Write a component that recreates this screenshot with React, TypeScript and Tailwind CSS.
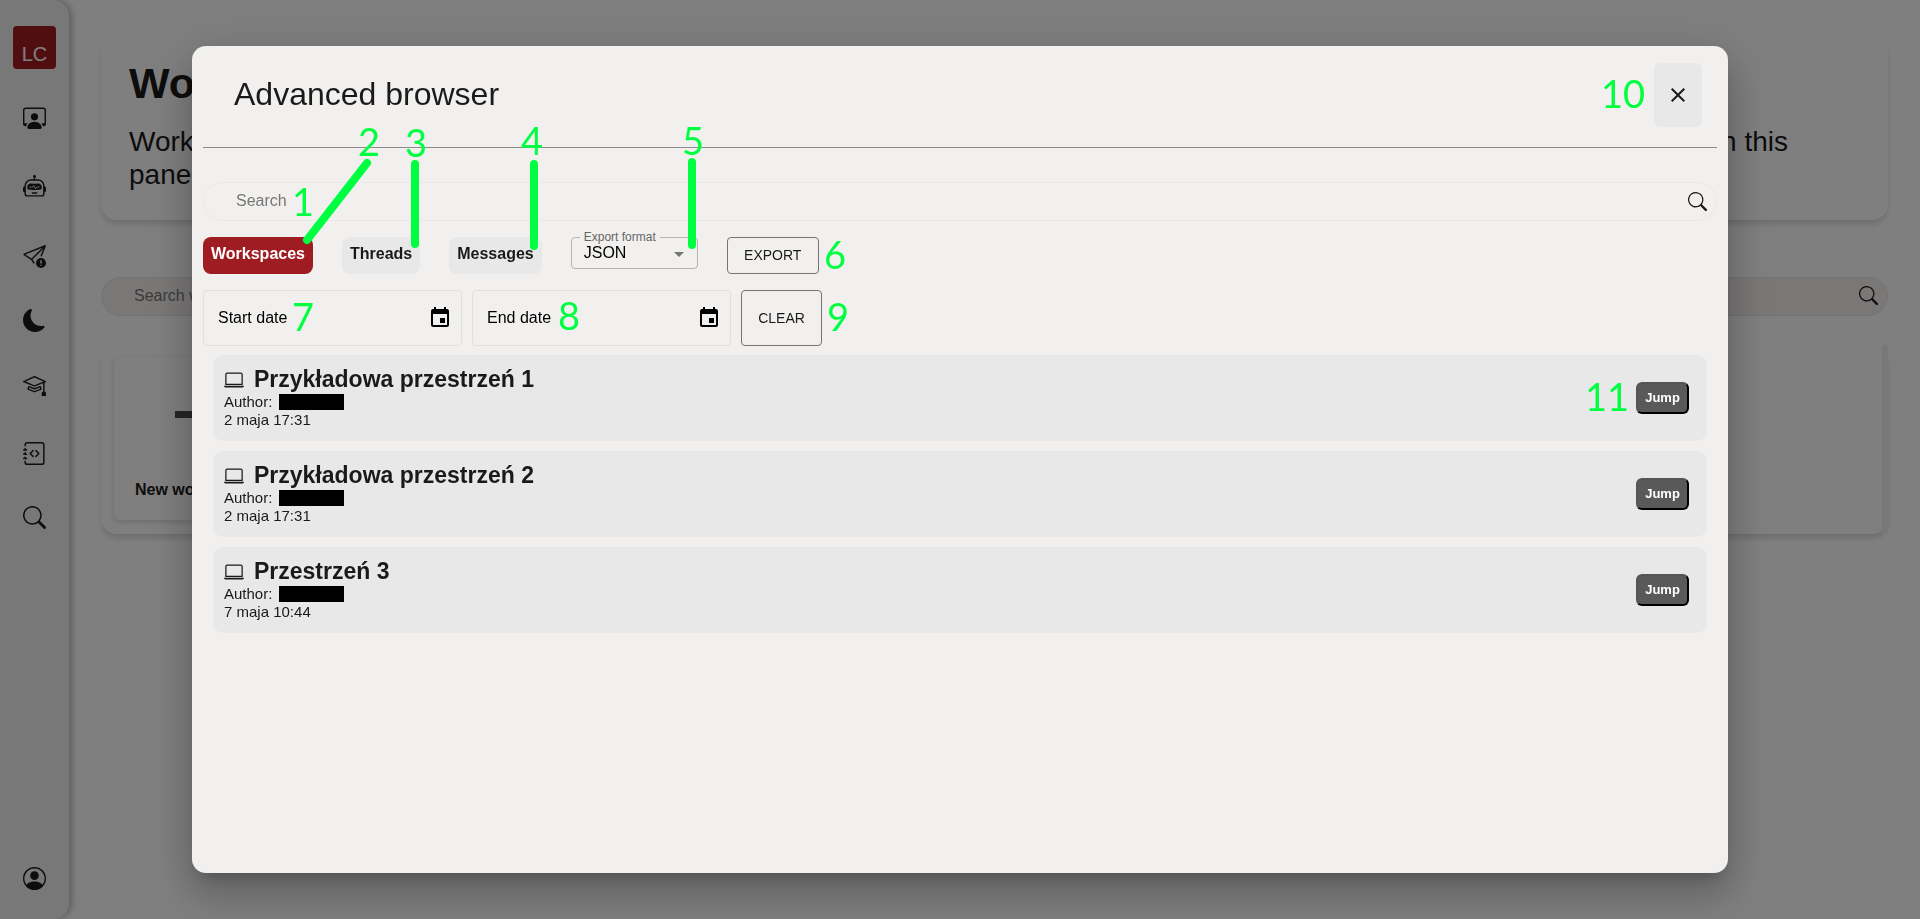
import { useState } from 'react';
import {
  BsJournalCode,
  BsLaptop,
  BsMoonFill,
  BsMortarboard,
  BsPersonCircle,
  BsPersonWorkspace,
  BsRobot,
  BsSearch,
  BsSendExclamation,
} from 'react-icons/bs';
import { MdArrowDropDown, MdClose, MdEvent } from 'react-icons/md';

const NAV_ITEMS = [
  { label: 'Workspaces', icon: BsPersonWorkspace, space: 'mb-[46px]' },
  { label: 'Assistants', icon: BsRobot, space: 'mb-[47px]' },
  { label: 'Report a problem', icon: BsSendExclamation, space: 'mb-[41px]' },
  { label: 'Dark mode', icon: BsMoonFill, space: 'mb-[41px]' },
  { label: 'Tutorial', icon: BsMortarboard, space: 'mb-[46px]' },
  { label: 'Documentation', icon: BsJournalCode, space: 'mb-[41px]' },
  { label: 'Advanced browser', icon: BsSearch, space: '' },
];

const TABS = ['Workspaces', 'Threads', 'Messages'] as const;

const RESULTS = [
  { id: 1, name: 'Przykładowa przestrzeń 1', date: '2 maja 17:31' },
  { id: 2, name: 'Przykładowa przestrzeń 2', date: '2 maja 17:31' },
  { id: 3, name: 'Przestrzeń 3', date: '7 maja 10:44' },
];

// Numbered callouts drawn on top of the dialog, relative to its corner
const CALLOUTS = [
  { text: '1', place: 'left-[100px] top-[136px]' },
  { text: '2', place: 'left-[166px] top-[76px]' },
  { text: '3', place: 'left-[213px] top-[77px]' },
  { text: '4', place: 'left-[329px] top-[75px]' },
  { text: '5', place: 'left-[490px] top-[75px]' },
  { text: '6', place: 'left-[632px] top-[189px]' },
  { text: '7', place: 'left-[100px] top-[251px]' },
  { text: '8', place: 'left-[366px] top-[250px]' },
  { text: '9', place: 'left-[635px] top-[251px]' },
  { text: '10', place: 'right-[83px] top-[28px]' },
  { text: '11', place: 'right-[99px] top-[331px]' },
];

function Sidebar() {
  return (
    <nav
      aria-label="Main"
      className="flex w-[69px] shrink-0 flex-col items-center rounded-r-2xl bg-[#f1f1f1] pt-[26px] pb-[29px] shadow-[3px_0_6px_0_rgba(0,0,0,0.25)]"
    >
      <a
        href="#home"
        className="mb-[37px] flex h-[43px] w-[43px] items-end justify-center rounded bg-[#a31d23] pb-[3px] text-xl leading-6 text-white"
      >
        LC
      </a>
      {NAV_ITEMS.map(({ label, icon: Icon, space }) => (
        <button key={label} type="button" aria-label={label} className={space}>
          <Icon className="size-[23px]" />
        </button>
      ))}
      <button type="button" aria-label="Account" className="mt-auto">
        <BsPersonCircle className="size-[23px]" />
      </button>
    </nav>
  );
}

function WorkspacesPage() {
  return (
    <main className="flex min-w-0 flex-1 flex-col pt-9 pr-8 pl-8">
      <section className="h-[184px] rounded-2xl px-7 pt-[21px] shadow-[0_5px_6px_-1px_rgba(0,0,0,0.15)]">
        <h1 className="text-[43px] leading-[52px] font-bold">Workspaces</h1>
        <p className="mt-4 text-[28px] leading-[33px]">
          <span className="flex justify-between pr-[72px]">
            <span>Workspaces keep your threads together.</span>
            <span>You can manage them in this</span>
          </span>
          panel.
        </p>
      </section>

      <div className="mt-[57px] flex h-[39px] items-center rounded-full border border-[#ebe4e4] bg-[#f4eeee] pr-[9px] pb-[2px] pl-8">
        <input
          type="search"
          aria-label="Search workspaces"
          placeholder="Search workspaces"
          className="min-w-0 flex-1 bg-transparent placeholder:text-[#777]"
        />
        <BsSearch className="size-[19px]" />
      </div>

      <section className="mt-[29px] flex h-[189px] items-start justify-between rounded-2xl pl-[13px] shadow-[0_5px_6px_-1px_rgba(0,0,0,0.15)]">
        <button
          type="button"
          className="mt-3 flex h-[163px] w-[162px] flex-col items-center rounded-md pt-[37px] font-bold shadow-[0_2px_5px_1px_rgba(0,0,0,0.12)]"
        >
          <svg viewBox="0 0 41 41" className="mb-[43px] size-[41px] shrink-0" aria-hidden="true">
            <path d="M0 20.5H41M20.5 0V41" stroke="#4b4b4b" strokeWidth="7" />
          </svg>
          New workspace
        </button>
        {/* scrollbar thumb */}
        <div className="h-full w-[6px] rounded-full bg-[#f0f0f0]" />
      </section>
    </main>
  );
}

function DateField({ label }: { label: string }) {
  return (
    <div className="flex h-14 w-[259px] items-center rounded border border-[#e0e0e0] pr-[9px] pl-[14px]">
      <input
        type="text"
        aria-label={label}
        placeholder={label}
        className="min-w-0 flex-1 bg-transparent text-black placeholder:text-black"
      />
      <button type="button" aria-label={`Choose ${label.toLowerCase()}`}>
        <MdEvent className="size-6 text-black" />
      </button>
    </div>
  );
}

function Callouts() {
  return (
    <div className="pointer-events-none absolute inset-0 font-['Lato',sans-serif] text-[38px] leading-none text-[#00ff40]">
      <svg
        className="absolute top-0 left-0 h-[220px] w-[520px]"
        viewBox="0 0 520 220"
        stroke="#00ff40"
        strokeWidth="8"
        strokeLinecap="round"
        aria-hidden="true"
      >
        <path d="M175 117L115 194M223 118V198M342 118V200M500 116V199" />
      </svg>
      {CALLOUTS.map(({ text, place }) => (
        <span key={text} className={`absolute ${place}`}>
          {text}
        </span>
      ))}
    </div>
  );
}

function AdvancedBrowser() {
  const [tab, setTab] = useState<string>('Workspaces');

  return (
    <div
      role="dialog"
      aria-modal="true"
      aria-labelledby="browser-title"
      className="relative flex h-[90vh] w-4/5 flex-col rounded-[14px] bg-[#f1f0ee] px-[11px] shadow-[0_11px_15px_-7px_rgba(0,0,0,0.2),0_24px_38px_3px_rgba(0,0,0,0.14),0_9px_46px_8px_rgba(0,0,0,0.12)]"
    >
      <header className="flex items-start justify-between border-b border-[#8c8c8c] pt-[17px] pr-[15px] pb-5 pl-[31px]">
        <h2 id="browser-title" className="text-[32px] leading-[62px]">
          Advanced browser
        </h2>
        <button
          type="button"
          aria-label="Close"
          className="flex h-16 w-12 items-center justify-center rounded-md bg-[#e8e8e8]"
        >
          <MdClose className="size-6" />
        </button>
      </header>

      <div className="mt-[34px] flex h-[39px] shrink-0 items-center rounded-full border border-[#e8e8e8] pr-[9px] pl-8">
        <input
          type="search"
          aria-label="Search"
          placeholder="Search"
          className="min-w-0 flex-1 bg-transparent placeholder:text-[#777]"
        />
        <BsSearch className="size-[19px]" />
      </div>

      <div className="mt-4 flex items-start gap-[29px]">
        {TABS.map((name) => (
          <button
            key={name}
            type="button"
            aria-pressed={tab === name}
            onClick={() => setTab(name)}
            className={`rounded-lg px-2 pt-[7px] pb-[10px] leading-5 font-bold ${
              tab === name ? 'bg-[#9f1d22] text-white' : 'bg-[#e8e8e8]'
            }`}
          >
            {name}
          </button>
        ))}

        <div className="relative h-8 w-[127px] rounded border border-[#b5b5b4]">
          <label
            htmlFor="export-format"
            className="absolute -top-2 left-2 bg-[#f1f0ee] px-1 text-xs leading-[14px] text-[#666]"
          >
            Export format
          </label>
          <select
            id="export-format"
            defaultValue="JSON"
            className="h-full w-full appearance-none bg-transparent pl-3 text-black"
          >
            <option>JSON</option>
            <option>CSV</option>
          </select>
          <MdArrowDropDown className="pointer-events-none absolute top-1 right-[6px] size-6 text-[#757575]" />
        </div>

        <button
          type="button"
          className="h-[37px] w-[92px] rounded border border-[#757575] text-sm"
        >
          EXPORT
        </button>
      </div>

      <div className="mt-4 flex gap-[10px]">
        <DateField label="Start date" />
        <DateField label="End date" />
        <button type="button" className="w-[81px] rounded border border-[#757575] text-sm">
          CLEAR
        </button>
      </div>

      <ul className="mt-[9px] flex flex-col gap-[10px] px-[10px]">
        {RESULTS.map((item) => (
          <li
            key={item.id}
            className="flex h-[86px] items-center justify-between rounded-[10px] bg-[#e8e8e8] pr-[18px] pl-[11px]"
          >
            <div className="text-[15px] leading-[18px]">
              <h3 className="flex items-center gap-[10px] text-[23px] leading-[27px] font-bold">
                <BsLaptop className="size-5" />
                {item.name}
              </h3>
              <p className="flex items-center gap-[7px]">
                Author: <span className="h-4 w-[65px] bg-black" />
              </p>
              <p>{item.date}</p>
            </div>
            <button
              type="button"
              className="h-8 w-[53px] rounded-md border-2 border-t-[#555] border-r-black border-b-black border-l-[#555] bg-[#595959] text-[13px] font-bold text-white"
            >
              Jump
            </button>
          </li>
        ))}
      </ul>

      <Callouts />
    </div>
  );
}

export default function App() {
  return (
    <div className="flex min-h-screen bg-white font-['Liberation_Sans',Arial,sans-serif] text-base text-[#1a1a1a]">
      <Sidebar />
      <WorkspacesPage />
      <div className="fixed inset-0 flex items-center justify-center bg-black/50">
        <AdvancedBrowser />
      </div>
    </div>
  );
}
